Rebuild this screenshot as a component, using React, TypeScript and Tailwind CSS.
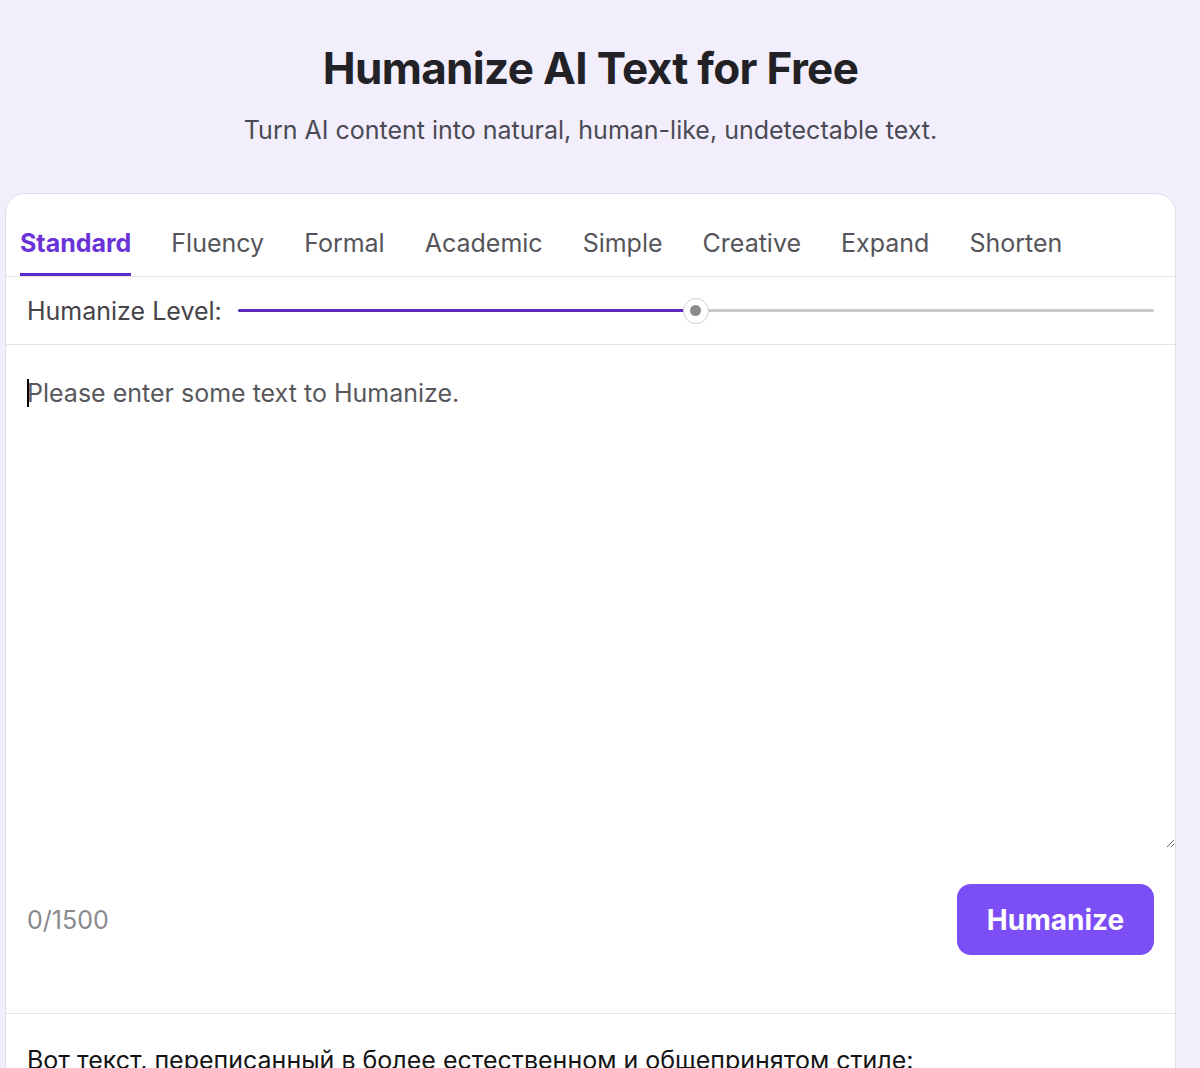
import { useState } from "react";

const TABS = ["Standard", "Fluency", "Formal", "Academic", "Simple", "Creative", "Expand", "Shorten"];

export default function App() {
  const [tab, setTab] = useState("Standard");
  const [level] = useState(50);
  const [text, setText] = useState("");

  return (
    <div className="min-h-[1068px] bg-[#f2eefc] font-['Inter','Noto_Sans',sans-serif] pt-[42px] overflow-hidden">
      {/* Header */}
      <div className="w-[1181px]">
        <h1 className="text-center text-[44px] leading-[53px] font-bold text-[#222226] tracking-[-0.015em]">
          Humanize AI Text for Free
        </h1>
        <p className="mt-[19px] text-center text-[25px] leading-[32px] text-[#4a4a55]">
          Turn AI content into natural, human-like, undetectable text.
        </p>
      </div>

      {/* Card */}
      <div className="mt-[47px] ml-[5px] w-[1171px] bg-white border border-[#e1e0ea] rounded-[20px] pb-[200px]">
        {/* Tabs */}
        <div className="flex gap-[40px] pl-[14px] border-b border-[#e3e3e8]">
          {TABS.map((t) => (
            <button
              key={t}
              onClick={() => setTab(t)}
              className={`pt-[33px] pb-[14px] text-[25px] leading-[32px] border-b-[3px] ${
                tab === t
                  ? "font-bold text-[#6a33d9] border-[#5b2bcf]"
                  : "text-[#555559] border-transparent"
              }`}
            >
              {t}
            </button>
          ))}
        </div>

        {/* Level slider */}
        <div className="flex items-center h-[68px] px-[21px] border-b border-[#e3e3e8]">
          <span className="text-[25px] leading-[32px] text-[#444448] whitespace-nowrap">Humanize Level:</span>
          <div className="relative flex-1 ml-[16px] h-[26px] flex items-center">
            <div className="w-full h-[3px] bg-[#c9c9cc] rounded-full" />
            <div className="absolute left-0 h-[3px] bg-[#5a2bb8] rounded-full" style={{ width: `${level}%` }} />
            <div
              className="absolute w-[26px] h-[26px] -ml-[13px] rounded-full bg-white border-[1.5px] border-[#cfcfd2] flex items-center justify-center"
              style={{ left: `${level}%` }}
            >
              <div className="w-[11px] h-[11px] rounded-full bg-[#8b8b8f]" />
            </div>
          </div>
        </div>

        {/* Input */}
        <div className="relative">
          <textarea
            value={text}
            onChange={(e) => setText(e.target.value)}
            placeholder="Please enter some text to Humanize."
            className="block w-full h-[503px] pt-[32px] px-[21px] text-[25px] leading-[32px] text-[#222] placeholder:text-[#58585c] outline-none resize-y bg-transparent"
          />
          {/* caret */}
          <span className="absolute left-[21px] top-[34px] w-[2px] h-[28px] bg-black pointer-events-none" />
        </div>

        {/* Footer */}
        <div className="flex items-center justify-between px-[21px] pt-[36px] pb-[58px] border-b border-[#e3e3e8]">
          <span className="text-[25px] leading-[32px] text-[#8a8a8e]">{text.length}/1500</span>
          <button className="w-[197px] h-[71px] rounded-[14px] bg-[#7b4ef6] text-white text-[28px] font-bold">
            Humanize
          </button>
        </div>

        {/* Output */}
        <div className="px-[21px] pt-[30px]">
          <p className="text-[25px] leading-[32px] text-[#141414]">
            Вот текст, переписанный в более естественном и общепринятом стиле:
          </p>
        </div>
      </div>
    </div>
  );
}
